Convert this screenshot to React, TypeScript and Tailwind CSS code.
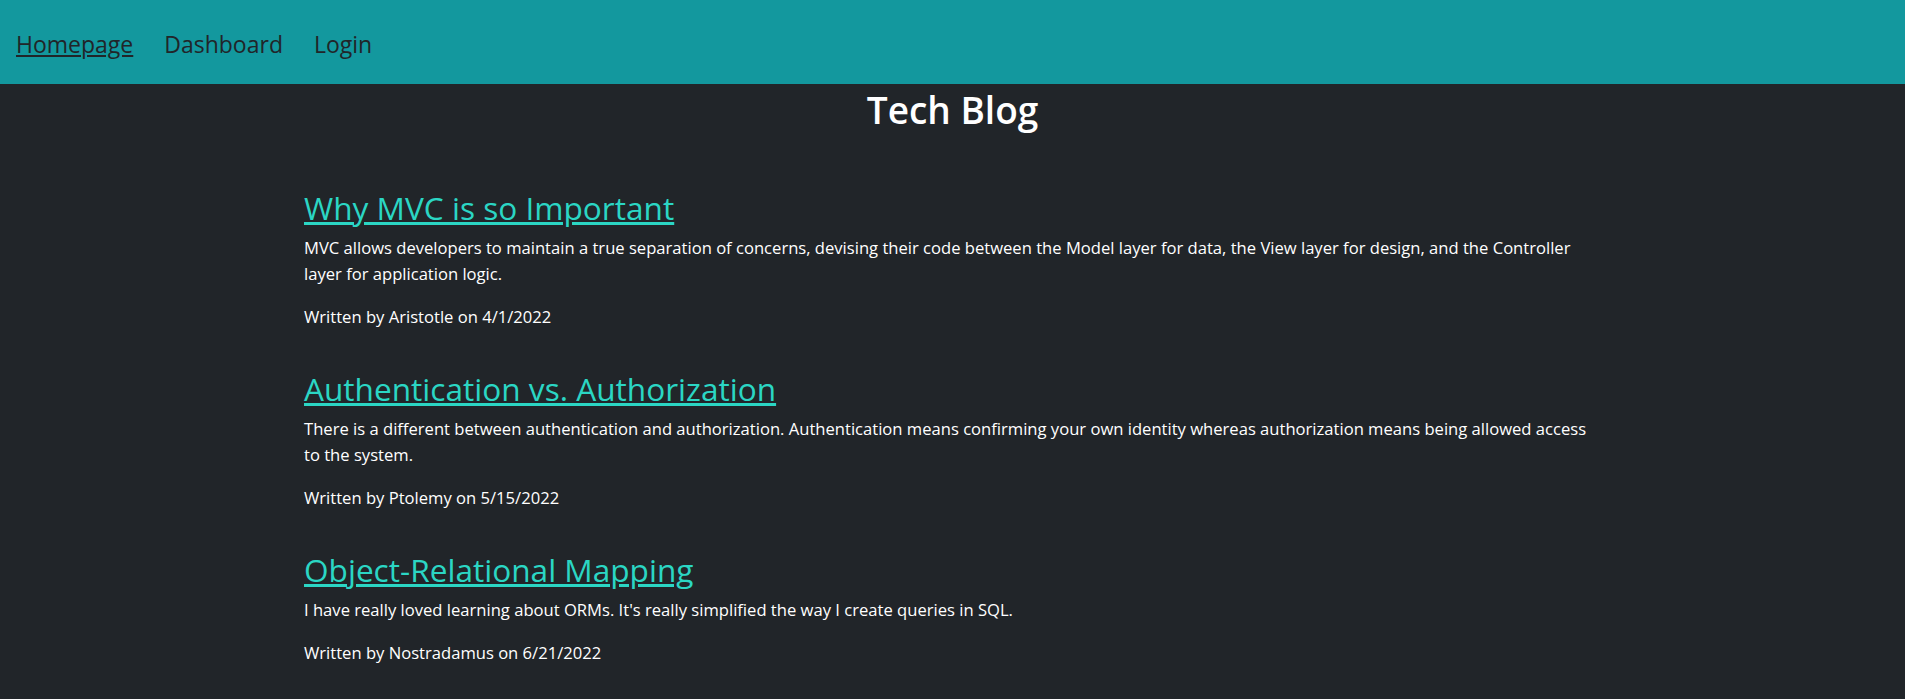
import React from 'react';

type Post = {
	id: number;
	title: string;
	content: string;
	author: string;
	date: string;
};

const posts: Post[] = [
	{
		id: 1,
		title: 'Why MVC is so Important',
		content:
			'MVC allows developers to maintain a true separation of concerns, devising their code between the Model layer for data, the View layer for design, and the Controller layer for application logic.',
		author: 'Aristotle',
		date: '4/1/2022',
	},
	{
		id: 2,
		title: 'Authentication vs. Authorization',
		content:
			'There is a different between authentication and authorization. Authentication means confirming your own identity whereas authorization means being allowed access to\u00A0the system.',
		author: 'Ptolemy',
		date: '5/15/2022',
	},
	{
		id: 3,
		title: 'Object-Relational Mapping',
		content:
			"I have really loved learning about ORMs. It's really simplified the way I create queries in SQL.",
		author: 'Nostradamus',
		date: '6/21/2022',
	},
];

function Navbar() {
	return (
		<header className="h-[84px] bg-[#13989e] flex items-center px-4 pt-[4px]">
			<nav className="flex flex-row items-center gap-[31px] text-[23px] text-[#212529]">
				<a href="#" className="underline decoration-2 underline-offset-[2px]">
					Homepage
				</a>
				<a href="#">Dashboard</a>
				<a href="#">Login</a>
			</nav>
		</header>
	);
}

function PostCard({ post }: { post: Post }) {
	return (
		<article className="mb-[40px]">
			<h2 className="text-[31.6px] leading-[38px] mb-[8px]">
				<a
					href="#"
					className="text-[#2bd6c4] underline decoration-[3px] underline-offset-[2px]"
				>
					{post.title}
				</a>
			</h2>
			<p className="text-[16.6px] leading-[26px] mb-[17px]">{post.content}</p>
			<p className="text-[16.6px] leading-[26px]">
				Written by {post.author} on {post.date}
			</p>
		</article>
	);
}

export default function App() {
	return (
		<div className="min-h-screen bg-[#212529] text-white font-['Open_Sans',sans-serif]">
			<Navbar />
			<main>
				<h1 className="text-center text-[37px] leading-[45px] font-semibold mt-[3px] mb-[57px]">
					Tech Blog
				</h1>
				<section className="mx-auto w-[1297px]">
					{posts.map((post) => (
						<PostCard key={post.id} post={post} />
					))}
				</section>
			</main>
		</div>
	);
}
